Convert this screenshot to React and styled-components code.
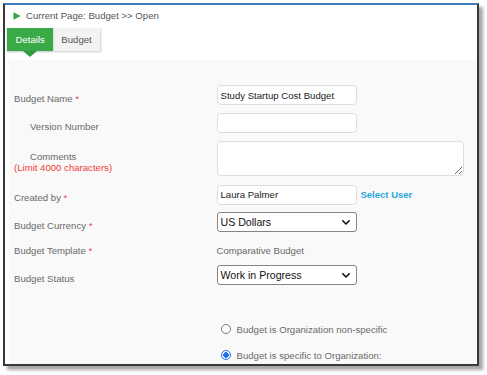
import React from "react";
import styled, { createGlobalStyle } from "styled-components";

const Global = createGlobalStyle`
  html, body { margin: 0; padding: 0; background: #ffffff; }
  body { font-family: "Liberation Sans", Arial, sans-serif; }
  * { box-sizing: border-box; }
`;

const Page = styled.div`
  padding: 3px;
  width: 487px;
  height: 375px;
`;

const Frame = styled.div`
  width: 476px;
  height: 363px;
  border: 2px solid #393939;
  border-top-color: #3f7bbd;
  background: #ffffff;
  box-shadow: 4px 4px 3px rgba(0, 0, 0, 0.35);
  overflow: hidden;
  display: flex;
  flex-direction: column;
`;

const Breadcrumb = styled.div`
  display: flex;
  align-items: center;
  gap: 3px;
  padding: 5px 0 0 8px;
  height: 17px;
  line-height: 12px;
  font-size: 9.6px;
  color: #555555;
`;

const Tabs = styled.div`
  display: flex;
  margin: 6px 0 0 2px;
`;

const Tab = styled.div`
  position: relative;
  height: 23px;
  padding: 0 ${(p) => (p.$active ? "8.5px" : "8px")};
  display: flex;
  align-items: center;
  font-size: 9.6px;
  color: ${(p) => (p.$active ? "#ffffff" : "#555555")};
  background: ${(p) => (p.$active ? "#3aaa49" : "#f3f3f3")};
  box-shadow: ${(p) =>
    p.$active ? "0 1px 2px rgba(0,0,0,0.25)" : "1px 1px 2px rgba(0,0,0,0.2)"};
  z-index: ${(p) => (p.$active ? 2 : 1)};

  &::after {
    content: "";
    display: ${(p) => (p.$active ? "block" : "none")};
    position: absolute;
    left: 50%;
    top: 100%;
    transform: translateX(-50%);
    border-left: 7px solid transparent;
    border-right: 7px solid transparent;
    border-top: 6px solid #2e9b3e;
  }
`;

const Panel = styled.div`
  flex: 1;
  margin: 9px 0 0 4px;
  padding: 25px 0 0 5px;
  background: #f9f9f9;
`;

const Row = styled.div`
  display: flex;
  align-items: flex-start;
  margin-bottom: ${(p) => p.$mb ?? 8}px;
`;

const Label = styled.div`
  width: 202.5px;
  flex: none;
  padding-top: ${(p) => p.$pt ?? 7.5}px;
  padding-left: ${(p) => (p.$indent ? 16 : 0)}px;
  font-size: 9.6px;
  line-height: ${(p) => p.$lh ?? 12}px;
  color: #6a6a6a;
`;

const Req = styled.span`
  color: #e8413c;
`;

const Note = styled.div`
  margin-left: -16px;
  color: #f23a3a;
`;

const TextInput = styled.div`
  width: 140px;
  height: 20px;
  border: 1px solid #dddddd;
  border-radius: 4px;
  background: #ffffff;
  padding: 0 3px;
  display: flex;
  align-items: center;
  font-size: 9.6px;
  color: #222222;
`;

const TextArea = styled.textarea`
  width: 247.5px;
  height: 35px;
  border: 1px solid #dddddd;
  border-radius: 4px;
  background: #ffffff;
  margin: 0;
  padding: 2px 3px;
  font-family: inherit;
  font-size: 9.6px;
  display: block;
`;

const SelectBox = styled.div`
  width: 140px;
  height: 20px;
  border: 1px solid #858585;
  border-radius: 3px;
  background: #ffffff;
  padding: 0 5.5px 0 3px;
  display: flex;
  align-items: center;
  justify-content: space-between;
  font-size: 10.6px;
  color: #111111;
`;

const LinkText = styled.span`
  margin-left: 4px;
  line-height: 20px;
  font-size: 9.5px;
  font-weight: bold;
  color: #2aa8e0;
`;

const PlainValue = styled.div`
  padding-top: 5px;
  font-size: 9.6px;
  line-height: 12px;
  color: #6a6a6a;
`;

const RadioGroup = styled.div`
  margin: 37.5px 0 0 206.5px;
  display: flex;
  flex-direction: column;
  gap: 12px;
`;

const RadioRow = styled.label`
  display: flex;
  align-items: center;
  gap: 6px;
  height: 14px;
  font-size: 9.6px;
  color: #6a6a6a;
`;

const Radio = styled.span`
  width: 10px;
  height: 10px;
  flex: none;
  border-radius: 50%;
  border: 1px solid ${(p) => (p.$checked ? "#1a73e8" : "#7a7a7a")};
  background: ${(p) =>
    p.$checked
      ? "radial-gradient(circle, #1a73e8 0 2.6px, #ffffff 3px)"
      : "#ffffff"};
  margin-top: -2px;
`;

const Play = () => (
  <svg width="8" height="8" viewBox="0 0 8 8" style={{ marginRight: 2 }}>
    <path d="M0.5 0.3 L7.6 4 L0.5 7.7 Z" fill="#2fa843" />
  </svg>
);

const Chevron = () => (
  <svg width="8" height="5" viewBox="0 0 8 5">
    <path
      d="M0.8 0.8 L4 4 L7.2 0.8"
      fill="none"
      stroke="#111"
      strokeWidth="1.6"
      strokeLinecap="round"
      strokeLinejoin="round"
    />
  </svg>
);

export default function App() {
  return (
    <>
      <Global />
      <Page>
        <Frame>
          <Breadcrumb>
            <Play />
            <span>Current Page: Budget &gt;&gt; Open</span>
          </Breadcrumb>
          <Tabs>
            <Tab $active>Details</Tab>
            <Tab>Budget</Tab>
          </Tabs>
          <Panel>
            <Row>
              <Label>
                Budget Name <Req>*</Req>
              </Label>
              <TextInput>Study Startup Cost Budget</TextInput>
            </Row>
            <Row $mb={8}>
              <Label $indent>Version Number</Label>
              <TextInput />
            </Row>
            <Row $mb={8.5}>
              <Label $indent $pt={10} $lh={11.4}>
                Comments
                <Note>(Limit 4000 characters)</Note>
              </Label>
              <TextArea />
            </Row>
            <Row $mb={7.5}>
              <Label>
                Created by <Req>*</Req>
              </Label>
              <TextInput>Laura Palmer</TextInput>
              <LinkText>Select User</LinkText>
            </Row>
            <Row>
              <Label $pt={8}>
                Budget Currency <Req>*</Req>
              </Label>
              <SelectBox>
                <span>US Dollars</span>
                <Chevron />
              </SelectBox>
            </Row>
            <Row>
              <Label $pt={5}>
                Budget Template <Req>*</Req>
              </Label>
              <PlainValue>Comparative Budget</PlainValue>
            </Row>
            <Row $mb={0}>
              <Label $pt={8}>Budget Status</Label>
              <SelectBox>
                <span>Work in Progress</span>
                <Chevron />
              </SelectBox>
            </Row>
            <RadioGroup>
              <RadioRow>
                <Radio />
                <span>Budget is Organization non-specific</span>
              </RadioRow>
              <RadioRow>
                <Radio $checked />
                <span>Budget is specific to Organization:</span>
              </RadioRow>
            </RadioGroup>
          </Panel>
        </Frame>
      </Page>
    </>
  );
}
